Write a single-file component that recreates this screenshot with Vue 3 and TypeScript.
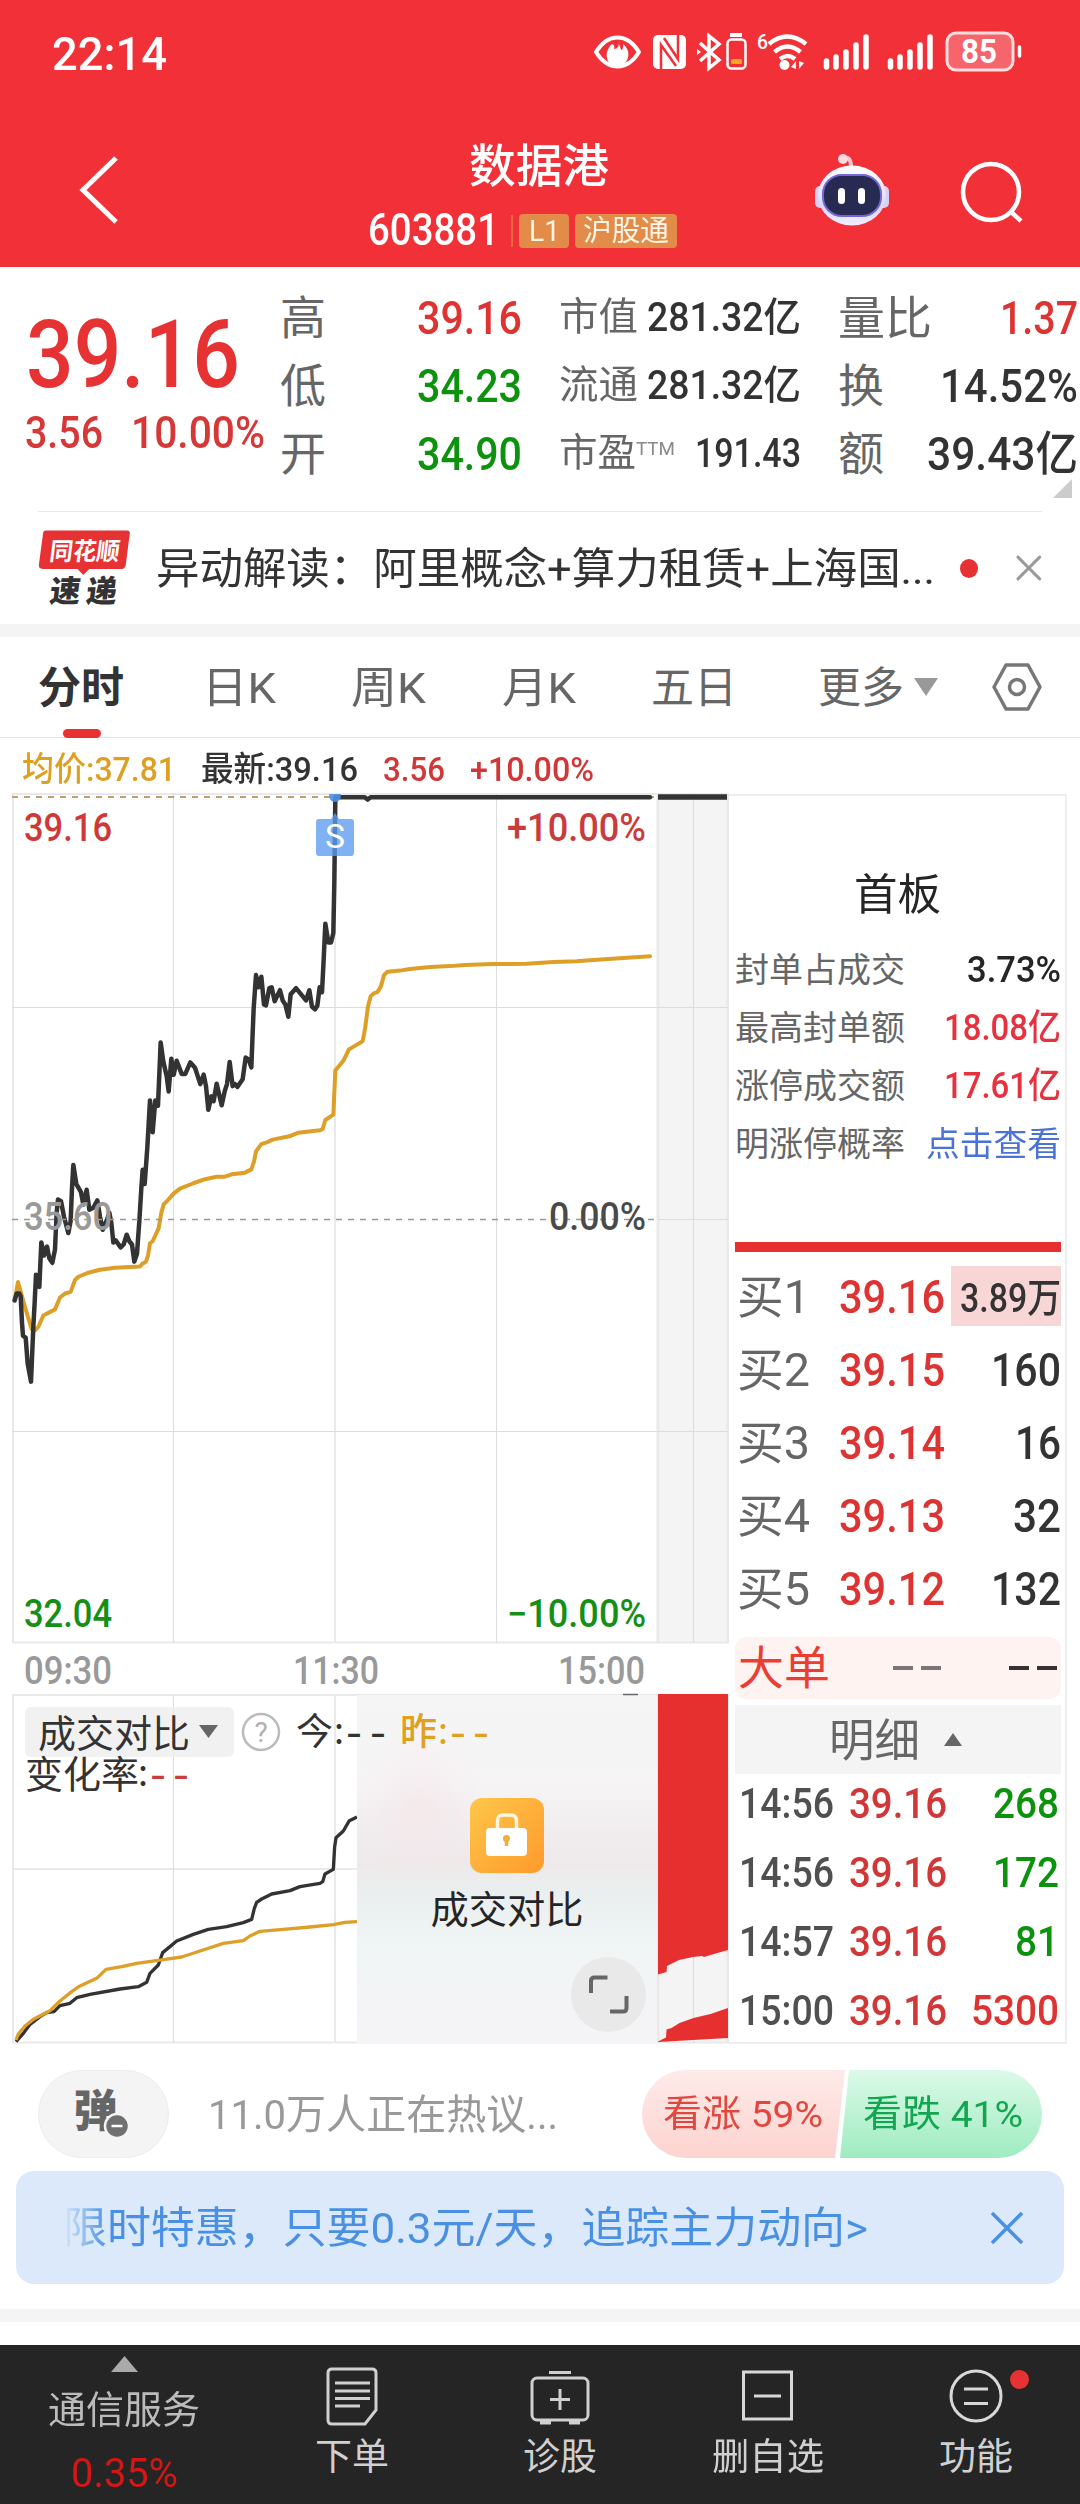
<script setup lang="ts">
import { defineComponent, h, onMounted, ref } from 'vue'

/* Text squeezed or stretched horizontally to an exact width. */
const Fit = defineComponent({
  props: { w: { type: Number, required: true }, s: { type: Number, required: true } },
  setup(props, { slots }) {
    const inner = ref<HTMLElement | null>(null)
    const k = ref(1)
    onMounted(() => {
      if (inner.value) k.value = props.w / inner.value.getBoundingClientRect().width
    })
    return () =>
      h('span', { class: 'fit', style: { width: props.w + 'px', fontSize: props.s + 'px' } }, [
        h('span', { ref: inner, class: 'fit-in', style: { transform: `scaleX(${k.value})` } }, slots.default?.()),
      ])
  },
})

interface Cell { label: string; lw: number; value: string; vw: number; tone: string; sup?: boolean }
const colA: Cell[] = [
  { label: '高', lw: 46, value: '39.16', vw: 105, tone: 'red' },
  { label: '低', lw: 46, value: '34.23', vw: 105, tone: 'green' },
  { label: '开', lw: 46, value: '34.90', vw: 105, tone: 'green' },
]
const colB: Cell[] = [
  { label: '市值', lw: 79, value: '281.32亿', vw: 154, tone: 'dark' },
  { label: '流通', lw: 79, value: '281.32亿', vw: 154, tone: 'dark' },
  { label: '市盈', lw: 77, value: '191.43', vw: 106, tone: 'dark', sup: true },
]
const colC: Cell[] = [
  { label: '量比', lw: 94, value: '1.37', vw: 78, tone: 'red' },
  { label: '换', lw: 46, value: '14.52%', vw: 138, tone: 'dark' },
  { label: '额', lw: 46, value: '39.43亿', vw: 151, tone: 'dark' },
]
const tabs = [
  { t: '分时', w: 86, gap: 78, on: true },
  { t: '日K', w: 74, gap: 75 },
  { t: '周K', w: 75, gap: 76 },
  { t: '月K', w: 74, gap: 75 },
  { t: '五日', w: 86, gap: 81 },
  { t: '更多', w: 86, gap: 0 },
]
const stats = [
  { l: '封单占成交', v: '3.73%', w: 94, tone: 'ink' },
  { l: '最高封单额', v: '18.08亿', w: 117, tone: 'crimson' },
  { l: '涨停成交额', v: '17.61亿', w: 117, tone: 'crimson' },
  { l: '明涨停概率', v: '点击查看', w: 135, tone: 'link' },
]
const bids = [
  { l: '买1', p: '39.16', v: '3.89万', w: 101, hot: true },
  { l: '买2', p: '39.15', v: '160', w: 70 },
  { l: '买3', p: '39.14', v: '16', w: 46 },
  { l: '买4', p: '39.13', v: '32', w: 48 },
  { l: '买5', p: '39.12', v: '132', w: 70 },
]
const ticks = [
  { t: '14:56', v: '268', w: 66, tone: 'green' },
  { t: '14:56', v: '172', w: 66, tone: 'green' },
  { t: '14:57', v: '81', w: 44, tone: 'green' },
  { t: '15:00', v: '5300', w: 88, tone: 'red' },
]

const price =
  '44,1275 50,1258 58,1258 62,1265 66,1330 69,1362 77,1366 83,1430 93,1474 100,1340 104,1280 108,1212 114,1240 118,1242 124,1133 132,1165 141,1143 148,1172 157,1183 165,1150 170,1060 174,1028 183,1032 192,1070 205,1110 212,1080 216,1000 220,943 229,990 243,1010 250,1040 260,1004 268,1053 280,1048 292,1030 300,1070 308,1102 322,1075 328,1060 334,1085 340,1133 347,1128 362,1145 371,1138 380,1114 388,1130 396,1138 403,1180 411,1160 418,1080 424,1000 428,955 434,990 442,900 450,785 458,863 466,785 474,798 478,720 482,643 490,690 500,725 506,763 514,683 521,722 530,688 545,720 556,720 571,692 585,705 601,745 611,722 618,750 625,808 634,775 641,787 650,744 665,797 674,763 681,745 689,691 698,750 705,745 712,752 728,733 737,680 746,685 754,704 757,640 761,560 768,478 775,508 784,482 792,550 798,552 808,510 815,508 824,542 840,515 848,540 856,550 865,580 872,525 888,510 918,540 928,515 936,555 945,562 952,553 959,508 966,520 971,440 976,352 985,398 993,398 1000,375 1003,250 1006,42 1094,42 1103,48 1112,42 1950,42'
const avg =
  '44,1275 54,1230 66,1265 80,1305 95,1345 105,1348 115,1340 130,1312 165,1297 180,1268 195,1258 212,1254 225,1225 235,1217 262,1208 300,1200 345,1195 420,1192 427,1185 438,1180 444,1165 450,1135 458,1130 476,1098 484,1060 491,1040 505,1028 520,1014 540,1001 580,988 615,978 650,972 675,972 695,966 735,962 754,954 762,935 768,910 784,892 800,888 818,881 868,873 895,864 960,858 968,855 976,833 1000,820 1006,712 1030,688 1047,660 1088,640 1095,610 1104,555 1112,530 1123,522 1133,519 1143,505 1152,478 1162,470 1200,467 1230,463 1290,458 1350,456 1395,453 1480,451 1580,450 1660,446 1730,444 1780,441 1870,436 1950,432'
const today =
  '48,1385 70,1360 90,1333 120,1310 140,1298 162,1295 180,1277 210,1270 230,1253 270,1243 360,1227 415,1220 440,1207 450,1180 475,1155 488,1118 510,1100 530,1083 580,1063 625,1048 680,1040 730,1028 755,1018 763,985 770,967 785,957 815,942 870,932 900,920 960,910 968,905 975,882 1000,868 1004,800 1008,773 1030,753 1048,722 1071,711'
const yesterday =
  '48,1380 55,1362 75,1338 100,1318 150,1292 180,1263 215,1235 240,1218 290,1195 318,1168 365,1160 410,1150 490,1139 545,1131 600,1113 670,1090 730,1082 750,1068 780,1054 850,1048 930,1041 1000,1034 1035,1027 1071,1025'
</script>

<template>
  <div class="page">
    <header class="head">
      <div class="status">
        <Fit :w="115" :s="47" class="med">22:14</Fit>
        <svg class="sys" width="436" height="44" viewBox="590 30 436 44" fill="none">
          <path d="M596 52q9-14.500 21.500-14.500t21.500 14.500q-9 14.500-21.500 14.500t-21.500-14.500z" stroke="#fff" stroke-width="4" stroke-linejoin="round" />
          <path d="M617 41c4 5 0 8-3 8 1-3 0-4-2-5-9 8-6 22 5 22s16-14 6-22c1 4-1 6-2 6-1-4-2-6-4-9z" fill="#fff" />
          <rect x="653" y="35" width="33" height="34" rx="5" fill="#fff" />
          <path d="M661 69V45l15 21M678 35v24L664 38" stroke="#f13037" stroke-width="2.500" />
          <path d="M700 43l19 17-10 8V36l10 8-19 17" stroke="#fff" stroke-width="3.500" />
          <path d="M697 49l4 3-4 3z" fill="#fff" />
          <rect x="730" y="33" width="12" height="4" fill="#fff" />
          <rect x="727.500" y="39.500" width="18" height="29" rx="4" stroke="#fff" stroke-width="2.500" />
          <rect x="731" y="59" width="11" height="5" rx="1.500" fill="#f5a623" />
          <text x="757" y="49" class="rob" font-size="21" font-weight="500" textLength="11" lengthAdjust="spacingAndGlyphs" fill="#fff">6</text>
          <path d="M769 44q18-15 37 0M774.500 52q13-11 26 0M780 59q8-6 15 0" stroke="#fff" stroke-width="4.500" />
          <circle cx="784.500" cy="65" r="5" fill="#fff" />
          <path d="M791 67l5-6v8zM804 63l-5 6v-8z" fill="#fff" />
          <g stroke="#fff" stroke-width="5.500" stroke-linecap="round">
            <path d="M826.500 61v6M836 57v10M846 52v15M856 45v22M866 37v30" />
            <path d="M890.500 61v6M900 57v10M910 52v15M920 45v22M930 37v30" />
          </g>
          <rect x="947" y="33" width="66" height="37" rx="9" fill="#f7656c" stroke="#fdd" stroke-width="3" />
          <path d="M1019.500 47v9" stroke="#fff" stroke-width="3.500" stroke-linecap="round" />
          <text x="961" y="63" class="rob" font-size="33" font-weight="700" textLength="36" lengthAdjust="spacingAndGlyphs" fill="#fff">85</text>
        </svg>
      </div>
      <div class="bar">
        <svg class="back" width="50" height="76" viewBox="0 0 50 76" fill="none"><path d="M41 6L8 38l33 32" stroke="#fff" stroke-width="5" /></svg>
        <div class="titles">
          <div class="name"><Fit :w="140" :s="46" class="med">数据港</Fit></div>
          <div class="sub">
            <Fit :w="131" :s="45" class="med">603881</Fit>
            <i class="sep"></i>
            <span class="tag t1"><Fit :w="31" :s="30">L1</Fit></span>
            <span class="tag t2"><Fit :w="86" :s="29">沪股通</Fit></span>
          </div>
        </div>
        <svg class="bot" width="80" height="76" viewBox="0 0 80 76">
          <defs><linearGradient id="hd" x1="0" y1="0" x2="0" y2="1"><stop offset="0" stop-color="#fff" /><stop offset=".7" stop-color="#dcd6f8" /><stop offset="1" stop-color="#f2efff" /></linearGradient></defs>
          <path d="M31 8q8-5 8 9" fill="none" stroke="#f8c6d0" stroke-width="4" />
          <circle cx="31" cy="8" r="5" fill="#ffd9e0" />
          <rect x="3" y="35" width="12" height="22" rx="5" fill="#d5cff5" /><rect x="65" y="35" width="12" height="22" rx="5" fill="#d5cff5" />
          <ellipse cx="40" cy="44.500" rx="34" ry="30" fill="url(#hd)" />
          <rect x="11" y="24" width="58" height="41" rx="19" fill="#272b52" stroke="#7466d8" stroke-width="2" />
          <rect x="26" y="37" width="7" height="16" rx="3.500" fill="#fff" /><rect x="46" y="37" width="7" height="16" rx="3.500" fill="#fff" />
        </svg>
        <svg class="find" width="70" height="70" viewBox="0 0 70 70" fill="none" stroke="#fff" stroke-width="4.500"><circle cx="35" cy="34" r="28" /><path d="M54 53l11 10" /></svg>
      </div>
    </header>

    <section class="quote">
      <div class="last med">
        <div class="big"><Fit :w="214" :s="95">39.16</Fit></div>
        <div class="chg"><Fit :w="78" :s="45">3.56</Fit><Fit :w="134" :s="45">10.00%</Fit></div>
      </div>
      <div class="cols">
        <div class="col c1">
          <div v-for="c in colA" :key="c.label" class="cell"><Fit :w="c.lw" :s="46" class="lab">{{ c.label }}</Fit><Fit :w="c.vw" :s="47" class="med" :class="c.tone">{{ c.value }}</Fit></div>
        </div>
        <div class="col c2">
          <div v-for="c in colB" :key="c.label" class="cell">
            <span class="lab pair"><Fit :w="c.lw" :s="39">{{ c.label }}</Fit><span v-if="c.sup" class="sup"><Fit :w="39" :s="19">TTM</Fit></span></span>
            <Fit :w="c.vw" :s="40" class="med" :class="c.tone">{{ c.value }}</Fit>
          </div>
        </div>
        <div class="col">
          <div v-for="c in colC" :key="c.label" class="cell"><Fit :w="c.lw" :s="46" class="lab">{{ c.label }}</Fit><Fit :w="c.vw" :s="47" class="med" :class="c.tone">{{ c.value }}</Fit></div>
        </div>
      </div>
      <svg class="corner" width="19" height="19"><path d="M19 0v19H0z" fill="#ccc" /></svg>
    </section>

    <section class="news">
      <svg width="96" height="76" viewBox="38 530 96 76">
        <path d="M46 530h82q4 0 3 4l-4 31q-1 4-4 4H90l-6 6-6-6H43q-5 0-4-5l4-30q0-4 3-4z" fill="#e63232" />
        <g transform="translate(0 560) skewX(-7)"><text x="49" y="0" class="cjk" font-size="25" font-weight="700" textLength="71" lengthAdjust="spacingAndGlyphs" fill="#fff">同花顺</text></g>
        <g transform="translate(0 602) skewX(-7)"><text x="49" y="0" class="cjk" font-size="31" font-weight="900" textLength="68" fill="#333">速递</text></g>
      </svg>
      <Fit :w="779" :s="43" class="dark news-t">异动解读：阿里概念+算力租赁+上海国...</Fit>
      <i class="dot"></i>
      <svg width="26" height="26" viewBox="-1 -1 26 26" stroke="#999" stroke-width="3" stroke-linecap="round"><path d="M1 1l22 22M23 1L1 23" /></svg>
    </section>
    <div class="band"></div>

    <nav class="tabs">
      <span v-for="t in tabs" :key="t.t" class="tab" :class="{ on: t.on }" :style="{ marginRight: t.gap + 'px' }"><Fit :w="t.w" :s="43">{{ t.t }}</Fit></span>
      <svg class="tri" width="24" height="20"><path d="M0 1h24L12 19z" fill="#999" /></svg>
      <svg class="hex" width="52" height="50" viewBox="0 0 52 50" fill="none" stroke="#777" stroke-width="3.500" stroke-linejoin="round"><path d="M15 3h22l12 22-12 22H15L3 25z" /><circle cx="26" cy="25" r="7.500" /></svg>
    </nav>

    <div class="legend">
      <Fit :w="154" :s="34" class="gold">均价:37.81</Fit>
      <Fit :w="157" :s="34" class="dark">最新:39.16</Fit>
      <Fit :w="62" :s="34" class="red2">3.56</Fit>
      <Fit :w="124" :s="34" class="red2">+10.00%</Fit>
    </div>

    <main class="market">
      <svg class="chart" width="729" height="1254" viewBox="0 792 729 1254">
        <defs>
          <linearGradient id="veil" x1="0" y1="0" x2="0" y2="1">
            <stop offset="0" stop-color="#f5f5f5" /><stop offset=".25" stop-color="#f6f4f5" /><stop offset=".48" stop-color="#eee9ea" />
            <stop offset=".56" stop-color="#eaeeee" /><stop offset=".72" stop-color="#eff5f5" /><stop offset=".9" stop-color="#f4f4f6" /><stop offset="1" stop-color="#f5f4f7" />
          </linearGradient>
          <radialGradient id="blush"><stop offset="0" stop-color="#f5e2e6" stop-opacity=".5" /><stop offset="1" stop-color="#f5e2e6" stop-opacity="0" /></radialGradient>
          <linearGradient id="lock" x1="0" y1="0" x2="1" y2="1"><stop offset="0" stop-color="#ffc64a" /><stop offset="1" stop-color="#fd9a2b" /></linearGradient>
        </defs>
        <rect x="658" y="795" width="70" height="848" fill="#f4f4f4" />
        <rect x="658" y="1695" width="70" height="348" fill="#f4f4f4" />
        <g stroke="#e9e9e9" stroke-width="2" fill="none">
          <path d="M12 794h717M13 794v849M335 794v849M12 1642.500h717M13 1695v348M335 1695v348M12 1695h717M12 1869h717M12 2042.500h717" />
          <path d="M658 794v849M728 794v849M658 1695v348M728 1695v348" stroke-width="3" />
        </g>
        <g stroke="#ddd" fill="none">
          <path d="M173.500 794v849M496.500 794v849M693.500 794v849M12 1007.500h717M12 1431.500h717M658 1219.500h71M173.500 1695v348M693.500 1695v348" />
        </g>
        <path d="M12 797h642" stroke="#c0a070" stroke-width="2" stroke-dasharray="6 6" />
        <g transform="translate(0 780) scale(.33333 .40816)" fill="none" stroke-linejoin="round" stroke-linecap="round">
          <polyline :points="avg" stroke="#dd9f28" stroke-width="4" vector-effect="non-scaling-stroke" />
          <polyline :points="price" stroke="#333" stroke-width="4.500" vector-effect="non-scaling-stroke" />
        </g>
        <path d="M12 1219.500h646" stroke="#999" stroke-width="1.500" stroke-dasharray="6 6" />
        <path d="M658 797h69" stroke="#333" stroke-width="5.500" />
        <path d="M329 794h12q0 8-6 8t-6-8z" fill="#4a90e2" opacity=".9" />
        <path d="M319 819h12l4-6 4 6h12q3 0 3 3v31q0 3-3 3h-32q-3 0-3-3v-31q0-3 3-3z" fill="#5c9bee" opacity=".78" />
        <text x="325" y="848" class="rob" font-size="34" textLength="20" lengthAdjust="spacingAndGlyphs" fill="#fff">S</text>
        <g class="rob" font-weight="500" font-size="38">
          <text x="24" y="841" textLength="88" lengthAdjust="spacingAndGlyphs" fill="#d03838">39.16</text>
          <text x="507" y="841" textLength="139" lengthAdjust="spacingAndGlyphs" fill="#c83c3c">+10.00%</text>
          <text x="24" y="1229.500" textLength="88" lengthAdjust="spacingAndGlyphs" fill="#999">35.60</text>
          <text x="549" y="1229.500" textLength="97" lengthAdjust="spacingAndGlyphs" fill="#4a4a4a">0.00%</text>
          <text x="24" y="1627" textLength="88" lengthAdjust="spacingAndGlyphs" fill="#158f15">32.04</text>
          <text x="507" y="1627" textLength="139" lengthAdjust="spacingAndGlyphs" fill="#158f15">−10.00%</text>
          <text x="24" y="1684" textLength="88" lengthAdjust="spacingAndGlyphs" fill="#999">09:30</text>
          <text x="293" y="1684" textLength="86" lengthAdjust="spacingAndGlyphs" fill="#999">11:30</text>
          <text x="558" y="1684" textLength="87" lengthAdjust="spacingAndGlyphs" fill="#999">15:00</text>
        </g>
        <g transform="translate(0 1580) scale(.33333)" fill="none" stroke-width="10" stroke-linejoin="round">
          <polyline :points="today" stroke="#333" /><polyline :points="yesterday" stroke="#dd9f28" />
        </g>
        <rect x="357" y="1695" width="300" height="349" fill="url(#veil)" />
        <path d="M623 1694.500h15" stroke="#666" stroke-width="1.500" />
        <ellipse cx="420" cy="1810" rx="62" ry="80" fill="url(#blush)" />
        <path d="M658 1694h70v256l-14 4-10 3-2-1-9 1-14 3-12 6-.5 6-8.500 2.500zM658 2042v-.5l8-4 .5-8 5-1.500 8-5 14-5 17-4 17.500-6v30z" fill="#e63030" />
        <rect x="25" y="1707" width="209" height="50" rx="6" fill="#ececec" opacity=".75" />
        <g class="cjk" font-size="38" fill="#333">
          <text x="38" y="1747" textLength="152" lengthAdjust="spacingAndGlyphs">成交对比</text>
          <text x="25" y="1787.500" textLength="114" lengthAdjust="spacingAndGlyphs">变化率</text>
          <text x="138" y="1786" font-size="36">:</text>
          <text x="296" y="1745" font-size="37">今</text>
          <text x="334" y="1744" font-size="36">:</text>
          <text x="430.500" y="1923" textLength="153" lengthAdjust="spacingAndGlyphs" fill="#252525">成交对比</text>
        </g>
        <g class="cjk" fill="#e0a020"><text x="400" y="1745" font-size="37" font-weight="500">昨</text><text x="438" y="1744" font-size="36">:</text></g>
        <g class="cjk" font-size="46">
          <text x="346 370" y="1748" fill="#333">--</text>
          <text x="450 473" y="1748" fill="#e0a020">--</text>
          <text x="150 173" y="1790" fill="#c83c3c">--</text>
        </g>
        <path d="M199 1725h19l-9.500 13z" fill="#666" />
        <circle cx="261" cy="1732" r="18" fill="none" stroke="#bbb" stroke-width="2.500" />
        <text x="261" y="1742" class="rob" font-size="28" text-anchor="middle" fill="#b0b0b0">?</text>
        <rect x="470" y="1798" width="74" height="75" rx="12" fill="url(#lock)" />
        <path d="M497.500 1829v-8q0-6 6-6h7q6 0 6 6v8" fill="none" stroke="#fff6dd" stroke-width="3.500" />
        <rect x="486" y="1828" width="41" height="28" rx="4" fill="#fff" />
        <circle cx="506.500" cy="1838.500" r="3.500" fill="#f0ac3c" /><path d="M506.500 1839v7" stroke="#f0ac3c" stroke-width="3.500" />
        <circle cx="608.500" cy="1994.500" r="37.500" fill="#e9e9e9" />
        <path d="M591 1993v-12q0-3.500 3.500-3.500h13M610 2011.500h13q3.500 0 3.500-3.500v-12" fill="none" stroke="#666" stroke-width="4" />
      </svg>

      <aside class="side">
        <div class="board"><Fit :w="87" :s="43" class="ink">首板</Fit></div>
        <div v-for="s in stats" :key="s.l" class="stat"><Fit :w="170" :s="34" class="lab">{{ s.l }}</Fit><Fit :w="s.w" :s="s.tone === 'link' ? 34 : 36" :class="[s.tone, { med: s.tone !== 'link' }]">{{ s.v }}</Fit></div>
        <div class="rule"></div>
        <div v-for="b in bids" :key="b.l" class="bid">
          <Fit :w="73" :s="46" class="lab">{{ b.l }}</Fit><Fit :w="106" :s="47" class="med red px">{{ b.p }}</Fit>
          <span class="vol" :class="{ hot: b.hot }"><Fit :w="b.w" :s="b.hot ? 40 : 47" class="med dark">{{ b.v }}</Fit></span>
        </div>
        <div class="large"><Fit :w="92" :s="46" class="flame">大单</Fit><span class="dd g"><i></i><i></i></span><span class="dd"><i></i><i></i></span></div>
        <div class="detail"><Fit :w="91" :s="45" class="lab">明细</Fit><svg width="18" height="13"><path d="M0 13h18L9 0z" fill="#666" /></svg></div>
        <div v-for="(t, i) in ticks" :key="i" class="tick med">
          <Fit :w="95" :s="43" class="time">{{ t.t }}</Fit><Fit :w="98" :s="43" class="red2">39.16</Fit>
          <span class="vol"><Fit :w="t.w" :s="43" :class="t.tone">{{ t.v }}</Fit></span>
        </div>
      </aside>
    </main>

    <section class="talk">
      <div class="bullet"><span class="tan">弹</span><svg class="mute" width="28" height="28" viewBox="0 0 28 28"><circle cx="14" cy="14" r="12" fill="#707070" stroke="#f4f4f4" stroke-width="2.500" /><path d="M8.500 14h11" stroke="#fff" stroke-width="2.500" /></svg></div>
      <Fit :w="350" :s="41" class="hint">11.0万人正在热议...</Fit>
      <div class="votes">
        <div class="up"><Fit :w="160" :s="37">看涨 59%</Fit></div>
        <div class="down"><Fit :w="160" :s="37">看跌 41%</Fit></div>
      </div>
    </section>
    <section class="promo">
      <span class="promo-t"><Fit :w="805" :s="43">限时特惠，只要0.3元/天，追踪主力动向&gt;</Fit></span>
      <svg width="32" height="32" viewBox="0 0 32 32" stroke="#4a90e2" stroke-width="3.500"><path d="M1 1l30 30M31 1L1 31" /></svg>
    </section>
    <div class="band b2"></div>

    <footer class="foot">
      <div class="sector">
        <svg width="27" height="16"><path d="M0 16h27L13.500 0z" fill="#aaa" /></svg>
        <div class="sn"><Fit :w="152" :s="38">通信服务</Fit></div>
        <div class="sv"><Fit :w="107" :s="40">0.35%</Fit></div>
      </div>
      <div class="item">
        <svg width="64" height="64" viewBox="0 0 64 64" fill="none" stroke="#d0d0d0" stroke-width="3"><path d="M12 5h40q4 0 4 4v37L45 60H12q-4 0-4-4V9q0-4 4-4z" /><path d="M15 19h35M15 27h35M15 34.500h35M15 42h25" /></svg>
        <Fit :w="74" :s="37">下单</Fit>
      </div>
      <div class="item">
        <svg width="64" height="64" viewBox="0 0 64 64" fill="none" stroke="#d0d0d0" stroke-width="3"><rect x="4" y="14" width="56" height="42" rx="5" /><path d="M21 8.500h22M32 25v21M22 35.500h20" /><path d="M12 58.500h11M41 58.500h11" stroke-width="4" /></svg>
        <Fit :w="74" :s="37">诊股</Fit>
      </div>
      <div class="item">
        <svg width="64" height="64" viewBox="0 0 64 64" fill="none" stroke="#d8d8d8" stroke-width="3"><rect x="7.500" y="8" width="48" height="47" /><path d="M18 32h27" /></svg>
        <Fit :w="112" :s="37">删自选</Fit>
      </div>
      <div class="item">
        <svg width="64" height="64" viewBox="0 0 64 64" fill="none" stroke="#d8d8d8" stroke-width="3"><circle cx="32" cy="32" r="25" /><path d="M20 25h24M20 39.500h24" /></svg>
        <Fit :w="74" :s="37">功能</Fit>
        <i class="badge"></i>
      </div>
    </footer>
  </div>
</template>

<style>
body { margin: 0; background: #fff; }
.fit { display: inline-block; white-space: nowrap; flex: none; }
.fit-in { display: inline-block; transform-origin: 0 50%; }
</style>
<style scoped>
.page { width: 1080px; height: 2504px; overflow: hidden; background: #fff; color: #333; font-family: Roboto, "Noto Sans CJK SC", sans-serif; line-height: 1; display: flex; flex-direction: column; }
.page > * { flex: none; box-sizing: border-box; }
.rob { font-family: Roboto, sans-serif; }
.cjk { font-family: "Noto Sans CJK SC", sans-serif; }
.med { font-weight: 500; }
.red { color: #de3333; }
.red2 { color: #d23737; }
.green { color: #0c920c; }
.dark { color: #333; }
.ink { color: #252525; }
.crimson { color: #e6323f; }
.link { color: #4a72d9; }
.gold { color: #dda022; }
.lab { color: #666; }
.flame { color: #e93f33; }
.time { color: #505050; }

.head { height: 267px; background: #f13037; color: #fff; }
.status { height: 106px; display: flex; align-items: center; justify-content: space-between; padding: 0 54px 0 52px; box-sizing: border-box; }
.sys { margin-top: -2px; }
.bar { display: flex; height: 161px; position: relative; }
.back { margin: 46px 0 0 75px; }
.titles { width: 318px; margin-left: 243px; }
.name { height: 54px; margin-top: 33px; padding-left: 101px; display: flex; align-items: center; }
.sub { display: flex; align-items: center; height: 34px; margin-top: 21px; }
.sep { width: 2px; height: 32px; background: #ea6a48; margin: 0 6px 0 12px; }
.sub > .fit { margin-top: -3px; }
.tag { height: 34px; border-radius: 4px; background: #e38c49; color: #fdf6e6; display: flex; align-items: center; justify-content: center; }
.t1 { width: 50px; margin-right: 6px; }
.t2 { width: 102px; }
.bot { margin: 45px 0 0 126px; }
.find { margin: 52px 0 0 64px; }

.quote { height: 244px; display: flex; position: relative; padding-top: 16px; }
.last { width: 256px; padding-left: 26px; box-sizing: border-box; color: #e63232; flex: none; }
.big { height: 95px; margin-top: 24px; }
.chg { display: flex; gap: 28px; margin-top: 8px; color: #d63838; margin-left: -1px; }
.cols { display: flex; gap: 39px; padding-left: 24px; }
.col { width: 240px; }
.c1 { width: 242px; margin-right: -2px; }
.c2 { width: 242px; margin-right: -2px; }
.cell { height: 68px; display: flex; align-items: center; justify-content: space-between; padding-top: 1px; box-sizing: border-box; }
.pair { display: flex; align-items: flex-start; }
.sup { padding-top: 5px; color: #888; }
.corner { position: absolute; right: 8px; top: 212px; }

.news { height: 113px; margin: 0 38px; border-top: 1.500px solid #e9e9e9; display: flex; align-items: center; }
.news-t { margin-left: 23px; padding-top: 2px; }
.dot { width: 19px; height: 19px; border-radius: 50%; background: #e63232; margin: 0 38px 0 25px; }
.band { height: 13px; background: #f4f4f4; }

.tabs { height: 101px; border-bottom: 1.500px solid #e4e4e4; display: flex; align-items: center; padding-left: 38px; color: #666; }
.tab { position: relative; padding-top: 2px; }
.on { color: #333; font-weight: 700; }
.on::after { content: ''; position: absolute; left: 25px; top: 64px; width: 38px; height: 9px; border-radius: 4.500px; background: #e63232; }
.tri { margin-left: 10px; }
.hex { margin-left: 53px; }

.legend { height: 54px; display: flex; align-items: center; padding: 8px 0 0 22px; font-weight: 500; }
.legend .fit { margin-right: 25px; }

.market { display: flex; height: 1254px; }
.chart { display: block; flex: none; }
.side { width: 338px; box-sizing: border-box; margin-top: 2px; border: 2px solid #eee; border-left: 0; padding: 78px 4px 0 6px; display: flex; flex-direction: column; height: 1250px; }
.side > div { flex: none; }
.board { height: 43px; padding-left: 119px; margin-bottom: 24px; }
.stat { height: 58px; display: flex; align-items: center; justify-content: space-between; }
.rule { height: 10px; background: #e63030; margin: 69px 0 7px; }
.bid { height: 73px; display: flex; align-items: center; padding-left: 2px; }
.bid > .fit { padding-top: 2px; }
.px { margin-left: 29px; }
.vol { margin-left: auto; height: 60px; display: flex; align-items: center; justify-content: flex-end; }
.bid .vol .fit { padding-top: 2px; }
.hot .fit { padding-top: 6px !important; }
.hot { background: #f9d6d6; width: 110px; }
.large { height: 62px; margin-top: 13px; border-radius: 12px; background: #fff3f2; display: flex; align-items: center; padding: 0 4px 0 3px; }
.dd { display: flex; gap: 8px; margin-left: 68px; }
.dd.g { margin-left: 63px; }
.dd i { width: 20px; height: 4px; background: #333; }
.dd.g i { background: #777; }
.detail { height: 69px; margin-top: 6px; background: #f4f4f4; display: flex; align-items: center; padding-left: 94px; gap: 24px; box-sizing: border-box; }
.detail .fit { padding-top: 4px; }
.detail + .tick { margin-top: -5px; }
.tick { height: 69px; display: flex; align-items: center; padding: 0 2px 0 4px; }
.tick > .red2 { margin-left: 15px; }

.talk { height: 88px; margin-top: 24px; padding: 0 38px; display: flex; align-items: center; }
.bullet { width: 131px; height: 88px; border-radius: 44px; background: #f4f4f4; border: 1px solid #ececec; box-sizing: border-box; position: relative; display: flex; align-items: center; justify-content: center; }
.tan { font-size: 44px; font-weight: 900; color: #666; margin: -4px 16px 0 0; }
.mute { position: absolute; left: 64px; top: 41px; }
.hint { color: #999; margin-left: 39px; padding-top: 2px; }
.votes { display: flex; margin-left: auto; width: 400px; }
.up, .down { height: 88px; display: flex; align-items: center; box-sizing: border-box; padding-top: 1px; }
.up { width: 203px; padding-left: 21px; color: #e0483f; background: linear-gradient(#fdebe9, #fdd3cf); border-radius: 44px 0 0 44px; clip-path: polygon(0 0, 100% 0, 193px 100%, 0 100%); }
.down { width: 202px; margin-left: -5px; padding-left: 23px; color: #14a550; background: linear-gradient(#dcf9e8, #9eecc0); border-radius: 0 44px 44px 0; clip-path: polygon(9px 0, 100% 0, 100% 100%, 0 100%); }

.promo { height: 113px; margin: 13px 16px 0; border-radius: 18px; background: #dbe9fb; color: #4a90e2; display: flex; align-items: center; justify-content: space-between; padding: 0 41px 0 47px; }
.promo-t { -webkit-mask-image: linear-gradient(90deg, transparent, #000 44px); mask-image: linear-gradient(90deg, transparent, #000 44px); padding: 2px 0 6px; margin-bottom: -6px; }
.b2 { margin-top: 25px; }

.foot { height: 159px; margin-top: 23px; background: #252525; color: #d0d0d0; display: flex; }
.sector { width: 248px; display: flex; flex-direction: column; align-items: center; padding-top: 11px; }
.sn { margin-top: 19px; color: #bbb; }
.sv { margin-top: 25px; color: #d31616; }
.item { width: 208px; position: relative; display: flex; flex-direction: column; align-items: center; padding-top: 19px; gap: 11px; }
.badge { position: absolute; left: 138px; top: 25px; width: 19px; height: 19px; border-radius: 50%; background: #e63232; }
</style>
